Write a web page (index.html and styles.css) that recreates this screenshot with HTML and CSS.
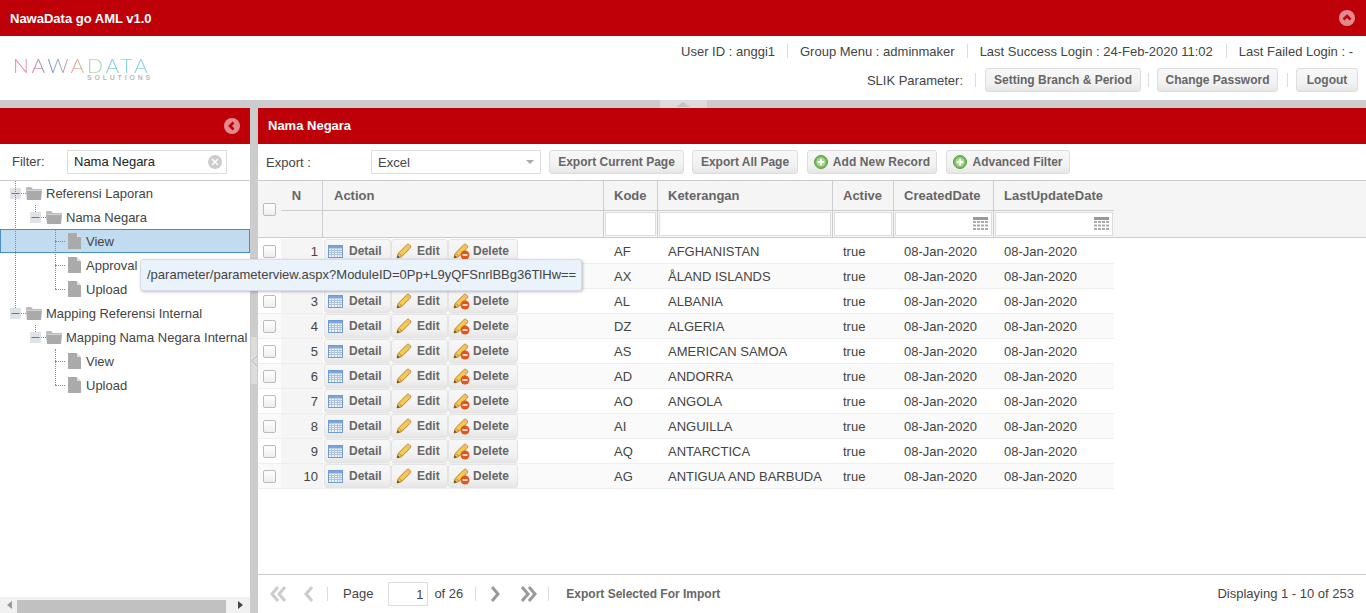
FILE: index.html
```html
<!DOCTYPE html>
<html lang="en">
<head>
  <meta charset="UTF-8" />
  <meta name="viewport" content="width=device-width, initial-scale=1.0"/>
  <title>NawaData go AML v1.0</title>
  <link rel="stylesheet" href="styles.css">
</head>
<body>
  <!-- Shared icons -->
  <svg class="icon-defs" aria-hidden="true">
    <symbol id="i-detail" viewBox="0 0 15 13">
      <rect x="0.5" y="0.5" width="14" height="12" fill="#f2f5fb" stroke="#6f9bd3"/>
      <rect x="1" y="1" width="13" height="2.500" fill="#7aa5dd"/>
      <path d="M1 5.500h13M1 7.500h13M1 9.500h13M3.500 4v8M6.500 4v8M9.500 4v8M12 4v8" stroke="#afc0da" stroke-width="1" fill="none"/>
    </symbol>
    <symbol id="i-pencil" viewBox="0 0 16 16">
      <path d="M1 15l1.200-4.600L10.800 1.800c.8-.8 1.800-.8 2.600 0l.8.8c.7.7.7 1.700 0 2.400L5.600 13.700z" fill="#f4cb4f" stroke="#b9812a" stroke-width="1" stroke-linejoin="round"/>
      <path d="M3.200 10.600l2.400 2.400" stroke="#b9812a" fill="none"/>
      <path d="M1 15l.7-2.800 2.100 2.100z" fill="#5a4a35"/>
      <path d="M10.500 2.500l3 3" stroke="#eab58a" stroke-width="1.400" fill="none"/>
    </symbol>
    <symbol id="i-delete" viewBox="0 0 17 17">
      <path d="M1 15l1.200-4.600L10.800 1.800c.8-.8 1.800-.8 2.600 0l.8.8c.7.7.7 1.700 0 2.400L5.600 13.700z" fill="#f4cb4f" stroke="#b9812a" stroke-width="1" stroke-linejoin="round"/>
      <path d="M3.200 10.600l2.400 2.400" stroke="#b9812a" fill="none"/>
      <path d="M1 15l.7-2.800 2.100 2.100z" fill="#5a4a35"/>
      <path d="M10.500 2.500l3 3" stroke="#eab58a" stroke-width="1.400" fill="none"/>
      <circle cx="12" cy="12" r="4.500" fill="#e2561c"/>
      <path d="M9.500 12h5" stroke="#fff" stroke-width="1.600"/>
    </symbol>
    <symbol id="i-add" viewBox="0 0 14 14">
      <circle cx="7" cy="7" r="6.500" fill="#74b95c" stroke="#5c9f48"/>
      <circle cx="7" cy="7" r="4.600" fill="#a7d88f"/>
      <path d="M7 3.800v6.400M3.800 7h6.400" stroke="#fff" stroke-width="2"/>
    </symbol>
    <symbol id="i-folder" viewBox="0 0 16 13">
      <path d="M0 1.500C0 .7.600 0 1.400 0h4l1.400 2H16v1H0z" fill="#bbb"/>
      <path d="M0 3.600h16L15 13H1z" fill="#aaa"/>
    </symbol>
    <symbol id="i-file" viewBox="0 0 13 16">
      <path d="M0 0h8.500L13 4.500V16H0z" fill="#aaa"/>
      <path d="M9 0l4 4H9z" fill="#ddd"/>
    </symbol>
    <symbol id="i-expander" viewBox="0 0 11 11">
      <rect width="11" height="11" fill="#dfe2e6"/>
      <path d="M1.500 5.500h8" stroke="#777"/>
    </symbol>
    <symbol id="i-calendar" viewBox="0 0 15 14">
      <rect width="15" height="3" fill="#999"/>
      <path d="M0 4h3v2H0zM4 4h3v2H4zM8 4h3v2H8zM12 4h3v2h-3zM0 7.500h3v2H0zM4 7.500h3v2H4zM8 7.500h3v2H8zM12 7.500h3v2h-3zM0 11h3v2H0zM4 11h3v2H4zM8 11h3v2H8zM12 11h3v2h-3z" fill="#aaa"/>
    </symbol>
  </svg>

  <div class="topbar">
    <span class="app-title">NawaData go AML v1.0</span>
    <svg class="round-btn" viewBox="0 0 16 16"><circle cx="8" cy="8" r="8" fill="#e28a8e"/><path d="M4.500 9.500L8 6l3.500 3.500" fill="none" stroke="#be0009" stroke-width="2.600"/></svg>
  </div>

  <header class="header">
    <div class="logo">
      <div class="logo-name">NAWADATA</div>
      <div class="logo-sub">SOLUTIONS</div>
    </div>
    <div class="user-area">
      <div class="user-info">
        <span>User ID : anggi1</span><i class="sep"></i>
        <span>Group Menu : adminmaker</span><i class="sep"></i>
        <span>Last Success Login : 24-Feb-2020 11:02</span><i class="sep"></i>
        <span>Last Failed Login : -</span>
      </div>
      <div class="user-actions">
        <span>SLIK Parameter:</span><i class="sep"></i>
        <button class="btn btn-branch">Setting Branch &amp; Period</button><i class="sep"></i>
        <button class="btn btn-pass">Change Password</button><i class="sep"></i>
        <button class="btn btn-logout">Logout</button>
      </div>
    </div>
  </header>

  <div class="split-h">
    <div class="split-h-handle"><svg width="14" height="5" viewBox="0 0 14 5"><path d="M0 5l7-5 7 5z" fill="#c4c4c4"/></svg></div>
  </div>

  <div class="main">
    <aside class="sidebar">
      <div class="panel-head panel-head-left">
        <svg class="round-btn" viewBox="0 0 16 16"><circle cx="8" cy="8" r="8" fill="#e28a8e"/><path d="M9.500 4.500L6 8l3.500 3.500" fill="none" stroke="#be0009" stroke-width="2.600"/></svg>
      </div>
      <div class="filter-bar">
        <label class="filter-label">Filter:</label>
        <div class="filter-box">
          <span>Nama Negara</span>
          <svg class="clear-icon" viewBox="0 0 14 14"><circle cx="7" cy="7" r="7" fill="#ccc"/><path d="M4 4l6 6M10 4l-6 6" stroke="#fff" stroke-width="1.500"/></svg>
        </div>
      </div>
      <div class="tree">
        <i class="tree-line line-a"></i>
        <i class="tree-line line-b"></i>
        <i class="tree-line line-c"></i>
        <i class="tree-line line-d"></i>
        <i class="tree-line line-e"></i>

        <div class="tree-row level-1"><svg class="tree-exp"><use href="#i-expander"/></svg><svg class="tree-folder"><use href="#i-folder"/></svg>Referensi Laporan</div>
        <div class="tree-row level-2"><svg class="tree-exp"><use href="#i-expander"/></svg><svg class="tree-folder"><use href="#i-folder"/></svg>Nama Negara</div>
        <div class="tree-row level-3 selected"><svg class="tree-file"><use href="#i-file"/></svg>View</div>
        <div class="tree-row level-3"><svg class="tree-file"><use href="#i-file"/></svg>Approval</div>
        <div class="tree-row level-3"><svg class="tree-file"><use href="#i-file"/></svg>Upload</div>
        <div class="tree-row level-1"><svg class="tree-exp"><use href="#i-expander"/></svg><svg class="tree-folder"><use href="#i-folder"/></svg>Mapping Referensi Internal</div>
        <div class="tree-row level-2"><svg class="tree-exp"><use href="#i-expander"/></svg><svg class="tree-folder"><use href="#i-folder"/></svg>Mapping Nama Negara Internal</div>
        <div class="tree-row level-3"><svg class="tree-file"><use href="#i-file"/></svg>View</div>
        <div class="tree-row level-3"><svg class="tree-file"><use href="#i-file"/></svg>Upload</div>
      </div>
      <div class="hscroll">
        <svg width="5" height="8" viewBox="0 0 5 8"><path d="M5 0L0 4l5 4z" fill="#999"/></svg>
        <div class="hscroll-thumb"></div>
        <svg width="5" height="8" viewBox="0 0 5 8"><path d="M0 0l5 4-5 4z" fill="#444"/></svg>
      </div>
    </aside>

    <div class="split-v">
      <div class="split-v-handle"><svg width="5" height="10" viewBox="0 0 5 10"><path d="M5 0L0 5l5 5" fill="none" stroke="#bbb"/></svg></div>
    </div>

    <section class="content">
      <div class="panel-head"><span class="panel-title">Nama Negara</span></div>

      <div class="toolbar">
        <span class="export-label">Export :</span>
        <div class="select-box"><span>Excel</span><i class="select-arrow"></i></div>
        <button class="btn btn-cur">Export Current Page</button>
        <button class="btn btn-all">Export All Page</button>
        <button class="btn btn-add"><svg class="ico-14"><use href="#i-add"/></svg>Add New Record</button>
        <button class="btn btn-filter"><svg class="ico-14"><use href="#i-add"/></svg>Advanced Filter</button>
      </div>

      <div class="grid-head">
        <table class="grid-table">
          <colgroup><col class="c-check"><col class="c-n"><col class="c-action"><col class="c-kode"><col class="c-ket"><col class="c-active"><col class="c-created"><col class="c-updated"></colgroup>
          <tr class="head-row">
            <th rowspan="2" class="th-check"><input type="checkbox" class="check"></th>
            <th class="th-n">N</th>
            <th class="th-action">Action</th>
            <th>Kode</th>
            <th>Keterangan</th>
            <th>Active</th>
            <th>CreatedDate</th>
            <th class="th-last">LastUpdateDate</th>
          </tr>
          <tr class="filter-row">
            <td></td>
            <td></td>
            <td><div class="col-filter"></div></td>
            <td><div class="col-filter"></div></td>
            <td><div class="col-filter"></div></td>
            <td><div class="col-filter"><svg class="cal"><use href="#i-calendar"/></svg></div></td>
            <td class="th-last"><div class="col-filter"><svg class="cal"><use href="#i-calendar"/></svg></div></td>
          </tr>
        </table>
      </div>

      <div class="grid-body">
        <table class="grid-table">
          <colgroup><col class="c-check"><col class="c-n"><col class="c-action"><col class="c-kode"><col class="c-ket"><col class="c-active"><col class="c-created"><col class="c-updated"></colgroup>
          <tr><td class="td-check"><input type="checkbox" class="check"></td><td class="td-n">1</td><td class="td-action"><button class="row-btn rb-detail"><svg class="ico-det"><use href="#i-detail"/></svg>Detail</button><button class="row-btn rb-edit"><svg class="ico-pen"><use href="#i-pencil"/></svg>Edit</button><button class="row-btn rb-del"><svg class="ico-del"><use href="#i-delete"/></svg>Delete</button></td><td>AF</td><td>AFGHANISTAN</td><td>true</td><td>08-Jan-2020</td><td>08-Jan-2020</td></tr>
          <tr><td class="td-check"><input type="checkbox" class="check"></td><td class="td-n">2</td><td class="td-action"><button class="row-btn rb-detail"><svg class="ico-det"><use href="#i-detail"/></svg>Detail</button><button class="row-btn rb-edit"><svg class="ico-pen"><use href="#i-pencil"/></svg>Edit</button><button class="row-btn rb-del"><svg class="ico-del"><use href="#i-delete"/></svg>Delete</button></td><td>AX</td><td>ÅLAND ISLANDS</td><td>true</td><td>08-Jan-2020</td><td>08-Jan-2020</td></tr>
          <tr><td class="td-check"><input type="checkbox" class="check"></td><td class="td-n">3</td><td class="td-action"><button class="row-btn rb-detail"><svg class="ico-det"><use href="#i-detail"/></svg>Detail</button><button class="row-btn rb-edit"><svg class="ico-pen"><use href="#i-pencil"/></svg>Edit</button><button class="row-btn rb-del"><svg class="ico-del"><use href="#i-delete"/></svg>Delete</button></td><td>AL</td><td>ALBANIA</td><td>true</td><td>08-Jan-2020</td><td>08-Jan-2020</td></tr>
          <tr><td class="td-check"><input type="checkbox" class="check"></td><td class="td-n">4</td><td class="td-action"><button class="row-btn rb-detail"><svg class="ico-det"><use href="#i-detail"/></svg>Detail</button><button class="row-btn rb-edit"><svg class="ico-pen"><use href="#i-pencil"/></svg>Edit</button><button class="row-btn rb-del"><svg class="ico-del"><use href="#i-delete"/></svg>Delete</button></td><td>DZ</td><td>ALGERIA</td><td>true</td><td>08-Jan-2020</td><td>08-Jan-2020</td></tr>
          <tr><td class="td-check"><input type="checkbox" class="check"></td><td class="td-n">5</td><td class="td-action"><button class="row-btn rb-detail"><svg class="ico-det"><use href="#i-detail"/></svg>Detail</button><button class="row-btn rb-edit"><svg class="ico-pen"><use href="#i-pencil"/></svg>Edit</button><button class="row-btn rb-del"><svg class="ico-del"><use href="#i-delete"/></svg>Delete</button></td><td>AS</td><td>AMERICAN SAMOA</td><td>true</td><td>08-Jan-2020</td><td>08-Jan-2020</td></tr>
          <tr><td class="td-check"><input type="checkbox" class="check"></td><td class="td-n">6</td><td class="td-action"><button class="row-btn rb-detail"><svg class="ico-det"><use href="#i-detail"/></svg>Detail</button><button class="row-btn rb-edit"><svg class="ico-pen"><use href="#i-pencil"/></svg>Edit</button><button class="row-btn rb-del"><svg class="ico-del"><use href="#i-delete"/></svg>Delete</button></td><td>AD</td><td>ANDORRA</td><td>true</td><td>08-Jan-2020</td><td>08-Jan-2020</td></tr>
          <tr><td class="td-check"><input type="checkbox" class="check"></td><td class="td-n">7</td><td class="td-action"><button class="row-btn rb-detail"><svg class="ico-det"><use href="#i-detail"/></svg>Detail</button><button class="row-btn rb-edit"><svg class="ico-pen"><use href="#i-pencil"/></svg>Edit</button><button class="row-btn rb-del"><svg class="ico-del"><use href="#i-delete"/></svg>Delete</button></td><td>AO</td><td>ANGOLA</td><td>true</td><td>08-Jan-2020</td><td>08-Jan-2020</td></tr>
          <tr><td class="td-check"><input type="checkbox" class="check"></td><td class="td-n">8</td><td class="td-action"><button class="row-btn rb-detail"><svg class="ico-det"><use href="#i-detail"/></svg>Detail</button><button class="row-btn rb-edit"><svg class="ico-pen"><use href="#i-pencil"/></svg>Edit</button><button class="row-btn rb-del"><svg class="ico-del"><use href="#i-delete"/></svg>Delete</button></td><td>AI</td><td>ANGUILLA</td><td>true</td><td>08-Jan-2020</td><td>08-Jan-2020</td></tr>
          <tr><td class="td-check"><input type="checkbox" class="check"></td><td class="td-n">9</td><td class="td-action"><button class="row-btn rb-detail"><svg class="ico-det"><use href="#i-detail"/></svg>Detail</button><button class="row-btn rb-edit"><svg class="ico-pen"><use href="#i-pencil"/></svg>Edit</button><button class="row-btn rb-del"><svg class="ico-del"><use href="#i-delete"/></svg>Delete</button></td><td>AQ</td><td>ANTARCTICA</td><td>true</td><td>08-Jan-2020</td><td>08-Jan-2020</td></tr>
          <tr><td class="td-check"><input type="checkbox" class="check"></td><td class="td-n">10</td><td class="td-action"><button class="row-btn rb-detail"><svg class="ico-det"><use href="#i-detail"/></svg>Detail</button><button class="row-btn rb-edit"><svg class="ico-pen"><use href="#i-pencil"/></svg>Edit</button><button class="row-btn rb-del"><svg class="ico-del"><use href="#i-delete"/></svg>Delete</button></td><td>AG</td><td>ANTIGUA AND BARBUDA</td><td>true</td><td>08-Jan-2020</td><td>08-Jan-2020</td></tr>
        </table>
      </div>

      <div class="pager">
        <svg class="pg-first" width="17" height="16" viewBox="0 0 17 16"><path d="M8 1L2 8l6 7M15 1L9 8l6 7" fill="none" stroke="#ccc" stroke-width="3"/></svg>
        <svg class="pg-prev" width="10" height="16" viewBox="0 0 10 16"><path d="M8 1L2 8l6 7" fill="none" stroke="#ccc" stroke-width="3"/></svg>
        <i class="pg-sep"></i>
        <span class="pg-word">Page</span>
        <div class="pg-input">1</div>
        <span class="pg-of">of 26</span>
        <i class="pg-sep"></i>
        <svg class="pg-next" width="10" height="16" viewBox="0 0 10 16"><path d="M2 1l6 7-6 7" fill="none" stroke="#999" stroke-width="3"/></svg>
        <svg class="pg-last" width="17" height="16" viewBox="0 0 17 16"><path d="M2 1l6 7-6 7M9 1l6 7-6 7" fill="none" stroke="#999" stroke-width="3"/></svg>
        <i class="pg-sep"></i>
        <span class="pg-export">Export Selected For Import</span>
        <span class="pg-display">Displaying 1 - 10 of 253</span>
      </div>
    </section>
  </div>

  <!-- Link tooltip from the tree -->
  <div class="tooltip">/parameter/parameterview.aspx?ModuleID=0Pp+L9yQFSnrlBBg36TlHw==</div>
</body>
</html>
```

FILE: styles.css
```css
* {
  box-sizing: border-box;
}

html, body {
  height: 100%;
}

body {
  margin: 0;
  display: flex;
  flex-direction: column;
  overflow: hidden;
  font-family: "Liberation Sans", Arial, sans-serif;
  font-size: 13px;
  color: #444;
  background: #fff;
}

.icon-defs {
  display: none;
}

/* Top red bar */
.topbar {
  height: 36px;
  flex: none;
  display: flex;
  align-items: center;
  justify-content: space-between;
  padding: 0 11px 0 10px;
  background: #be0009;
}

.app-title {
  color: #fff;
  font-size: 13px;
  font-weight: bold;
}

.round-btn {
  width: 16px;
  height: 16px;
}

/* Header */
.header {
  height: 64px;
  flex: none;
  display: flex;
  justify-content: space-between;
  background: #fff;
}

.logo {
  width: 140px;
  margin: 21px 0 0 13px;
}

.logo-name {
  font-family: Lato, "Liberation Sans", sans-serif;
  font-weight: 300;
  font-size: 20px;
  line-height: 16px;
  letter-spacing: 2.600px;
  white-space: nowrap;
  width: 134px;
  transform: scaleX(1.05);
  transform-origin: left;
  background: linear-gradient(90deg, #e8829b 0, #d98aa8 14%, #6e9fce 30%, #ef9e94 42%, #a5d89a 58%, #79cde0 70%, #84d3e2 100%);
  -webkit-background-clip: text;
  background-clip: text;
  color: transparent;
}

.logo-sub {
  margin-top: 1px;
  font-size: 7px;
  font-weight: bold;
  line-height: 7px;
  letter-spacing: 2.800px;
  text-align: right;
  color: #bbb;
}

.user-area {
  display: flex;
  flex-direction: column;
  align-items: flex-end;
  padding-right: 8px;
}

.user-info {
  height: 30px;
  display: flex;
  align-items: center;
  padding-right: 5px;
}

.user-actions {
  height: 24px;
  margin-top: 2px;
  display: flex;
  align-items: center;
}

.sep {
  width: 1px;
  height: 14px;
  margin: 0 12px;
  background: #ddd;
}

.user-info .sep:last-of-type {
  margin-left: 13px;
}

.user-actions .sep {
  margin: 0 8px;
}

.user-actions .sep:first-of-type {
  margin: 0 9px 0 12px;
}

/* Buttons */
.btn {
  height: 24px;
  padding: 0;
  display: flex;
  align-items: center;
  justify-content: center;
  font-family: inherit;
  font-size: 12px;
  font-weight: bold;
  color: #666;
  border: 1px solid #ddd;
  border-radius: 3px;
  background: linear-gradient(#f7f7f7 0, #f2f2f2 65%, #e6e6e6 100%);
}

.btn-branch { width: 156px; margin-right: -1px; }
.btn-pass { width: 121px; margin-right: 1px; }
.btn-logout { width: 62px; }
.btn-cur { width: 135px; margin-left: 8px; }
.btn-all { width: 106px; margin-left: 8px; }
.btn-add { width: 130px; margin-left: 9px; letter-spacing: 0.100px; }
.btn-filter { width: 124px; margin-left: 9px; }

.ico-14 {
  width: 14px;
  height: 14px;
  margin-right: 5px;
}

/* Horizontal splitter */
.split-h {
  height: 8px;
  flex: none;
  display: flex;
  justify-content: center;
  background: #ccc;
}

.split-h-handle {
  width: 47px;
  display: flex;
  align-items: center;
  justify-content: center;
  background: #dcdcdc;
}

/* Main area */
.main {
  flex: 1;
  min-height: 0;
  display: flex;
}

.sidebar {
  width: 250px;
  flex: none;
  display: flex;
  flex-direction: column;
}

.panel-head {
  height: 36px;
  flex: none;
  display: flex;
  align-items: center;
  padding: 0 10px;
  background: #be0009;
}

.panel-head-left {
  justify-content: flex-end;
}

.panel-title {
  margin-bottom: 2px;
  color: #fff;
  font-size: 13px;
  font-weight: bold;
}

.filter-bar {
  height: 37px;
  flex: none;
  display: flex;
  align-items: center;
  padding: 0 23px 1px 12px;
  border-bottom: 1px solid #ccc;
}

.filter-label {
  width: 55px;
}

.filter-box {
  width: 160px;
  height: 24px;
  display: flex;
  align-items: center;
  justify-content: space-between;
  padding: 0 4px 0 6px;
  color: #222;
  border: 1px solid #ddd;
}

.clear-icon {
  width: 14px;
  height: 14px;
}

/* Tree */
.tree {
  position: relative;
  flex: 1;
  min-height: 0;
}

.tree-row {
  position: relative;
  height: 24px;
  display: flex;
  align-items: center;
  white-space: nowrap;
  color: #444;
}

.level-1 { padding-left: 10px; }
.level-2 { padding-left: 30px; }
.level-3 { padding-left: 68px; }

.tree-row.selected {
  background: #c1dbf0;
  border: 1px solid #4a90c8;
  padding-left: 67px;
}

.tree-exp {
  flex: none;
  width: 11px;
  height: 11px;
  margin-right: 5px;
}

.tree-folder {
  flex: none;
  width: 16px;
  height: 13px;
  margin-right: 4px;
}

.tree-file {
  flex: none;
  width: 13px;
  height: 16px;
  margin-right: 5px;
}

.tree-line {
  position: absolute;
  z-index: 1;
}

.line-a {
  left: 15px;
  top: 0;
  height: 127px;
  border-left: 1px dotted #888;
}

.line-b {
  left: 35px;
  top: 24px;
  height: 7px;
  border-left: 1px dotted #888;
}

.line-c {
  left: 55px;
  top: 48px;
  height: 60px;
  border-left: 1px dotted #888;
}

.line-d {
  left: 35px;
  top: 144px;
  height: 7px;
  border-left: 1px dotted #888;
}

.line-e {
  left: 55px;
  top: 168px;
  height: 36px;
  border-left: 1px dotted #888;
}

.tree-row.level-3::before {
  content: "";
  position: absolute;
  left: 55px;
  top: 12px;
  width: 10px;
  border-top: 1px dotted #888;
}

.tree-row.selected::before {
  left: 54px;
  top: 11px;
}

.tree-row.level-1::before,
.tree-row.level-2::before {
  content: "";
  position: absolute;
  top: 12px;
  width: 5px;
  border-top: 1px dotted #888;
}

.tree-row.level-1::before { left: 21px; }
.tree-row.level-2::before { left: 41px; }

/* Sidebar scrollbar */
.hscroll {
  height: 16px;
  flex: none;
  display: flex;
  align-items: center;
  padding: 0 7px;
  background: #f1f1f1;
}

.hscroll-thumb {
  width: 209px;
  height: 13px;
  margin: 3px auto 0 5px;
  background: #c1c1c1;
}

/* Vertical splitter */
.split-v {
  width: 8px;
  flex: none;
  display: flex;
  align-items: center;
  background: #ccc;
}

.split-v-handle {
  width: 6px;
  height: 47px;
  margin-left: 1px;
  display: flex;
  align-items: center;
  justify-content: center;
  background: #dcdcdc;
}

/* Content */
.content {
  flex: 1;
  min-width: 0;
  display: flex;
  flex-direction: column;
}

.toolbar {
  height: 36px;
  flex: none;
  display: flex;
  align-items: center;
  padding-left: 8px;
}

.export-label {
  width: 105px;
}

.select-box {
  width: 170px;
  height: 24px;
  display: flex;
  align-items: center;
  justify-content: space-between;
  padding: 0 6px;
  color: #444;
  border: 1px solid #ddd;
}

.select-arrow {
  width: 0;
  height: 0;
  border-style: solid;
  border-width: 4px 4px 0;
  border-color: #aaa transparent transparent;
}

/* Grid */
.grid-head {
  height: 58px;
  flex: none;
  background: #f5f5f5;
  border-top: 1px solid #ccc;
  border-bottom: 1px solid #ccc;
}

.grid-table {
  width: 856px;
  table-layout: fixed;
  border-collapse: separate;
  border-spacing: 0;
}

.c-check { width: 23px; }
.c-n { width: 42px; }
.c-action { width: 281px; }
.c-kode { width: 54px; }
.c-ket { width: 175px; }
.c-active { width: 61px; }
.c-created { width: 100px; }
.c-updated { width: 120px; }

.head-row th {
  height: 30px;
  padding: 0 0 0 10px;
  text-align: left;
  font-size: 13px;
  font-weight: bold;
  color: #666;
  white-space: nowrap;
  border-right: 1px solid #ccc;
  border-bottom: 1px solid #ccc;
}

.head-row .th-check {
  padding: 0 0 0 5px;
  border: none;
}

.head-row .th-n {
  padding: 0 10px 0 0;
  text-align: center;
}

.head-row .th-action {
  padding-left: 11px;
}

.head-row .th-last,
.filter-row .th-last {
  border-right: none;
}

.filter-row td {
  height: 26px;
  padding: 1px;
  border-right: 1px solid #ccc;
}

.col-filter {
  height: 24px;
  display: flex;
  align-items: center;
  justify-content: flex-end;
  padding-right: 3px;
  background: #fff;
  border: 1px solid #ddd;
}

.cal {
  width: 15px;
  height: 14px;
}

.check {
  appearance: none;
  display: block;
  width: 13px;
  height: 13px;
  margin: 0;
  border: 1px solid #bbb;
  border-radius: 2px;
  background: linear-gradient(#fff, #eee);
}

.grid-body {
  flex: 1;
  min-height: 0;
  padding-top: 1px;
}

.grid-body td {
  height: 25px;
  padding: 1px 0 0 10px;
  color: #444;
  white-space: nowrap;
  border-bottom: 1px solid #eee;
}

.grid-body tr:nth-child(even) td {
  background: #fafafa;
}

.grid-body .td-check {
  padding-left: 5px;
  background: #fff;
}

.grid-body .td-n,
.grid-body tr:nth-child(even) .td-n {
  padding: 1px 5px 0 0;
  text-align: right;
  background: #f5f5f5;
}

.grid-body .td-action {
  padding: 0 0 0 1px;
  font-size: 0;
}

.row-btn {
  height: 24px;
  padding: 0;
  display: inline-flex;
  align-items: center;
  vertical-align: top;
  font-family: inherit;
  font-size: 12px;
  font-weight: bold;
  color: #666;
  border: 1px solid #e4e4e4;
  border-radius: 3px;
  background: linear-gradient(#f7f7f7 0, #f2f2f2 65%, #e6e6e6 100%);
}

.rb-detail { width: 67px; padding-left: 3px; }
.rb-edit { width: 57px; padding-left: 4px; }
.rb-del { width: 70px; padding-left: 4px; }

.ico-det {
  width: 15px;
  height: 13px;
  margin-right: 6px;
}

.ico-pen {
  width: 16px;
  height: 16px;
  margin-right: 5px;
}

.ico-del {
  width: 17px;
  height: 17px;
  margin-right: 3px;
}

/* Pager */
.pager {
  height: 39px;
  flex: none;
  display: flex;
  align-items: center;
  padding: 0 12px 1px 12px;
  border-top: 1px solid #ccc;
}

.pg-prev { margin-left: 17px; }

.pg-sep {
  width: 1px;
  height: 14px;
  background: #ddd;
}

.pager .pg-prev + .pg-sep { margin-left: 13px; }

.pg-word { margin-left: 15px; }

.pg-input {
  width: 40px;
  height: 24px;
  margin-left: 15px;
  padding-right: 4px;
  line-height: 23px;
  text-align: right;
  border: 1px solid #ddd;
}

.pg-of { margin-left: 6px; }

.pg-of + .pg-sep { margin-left: 12px; }

.pg-next { margin-left: 14px; }

.pg-last { margin-left: 20px; }

.pg-last + .pg-sep { margin-left: 11px; }

.pg-export {
  margin-left: 17px;
  font-size: 12px;
  font-weight: bold;
  color: #666;
}

.pg-display {
  margin-left: auto;
}

/* Tooltip */
.tooltip {
  position: absolute;
  left: 140px;
  top: 259px;
  width: 442px;
  height: 32px;
  padding-left: 6px;
  line-height: 30px;
  white-space: nowrap;
  color: #444;
  background: #eaf2fb;
  border: 1px solid #d5dde5;
  border-radius: 3px;
  box-shadow: 1px 1px 3px rgba(0, 0, 0, 0.25);
  z-index: 10;
}
```
